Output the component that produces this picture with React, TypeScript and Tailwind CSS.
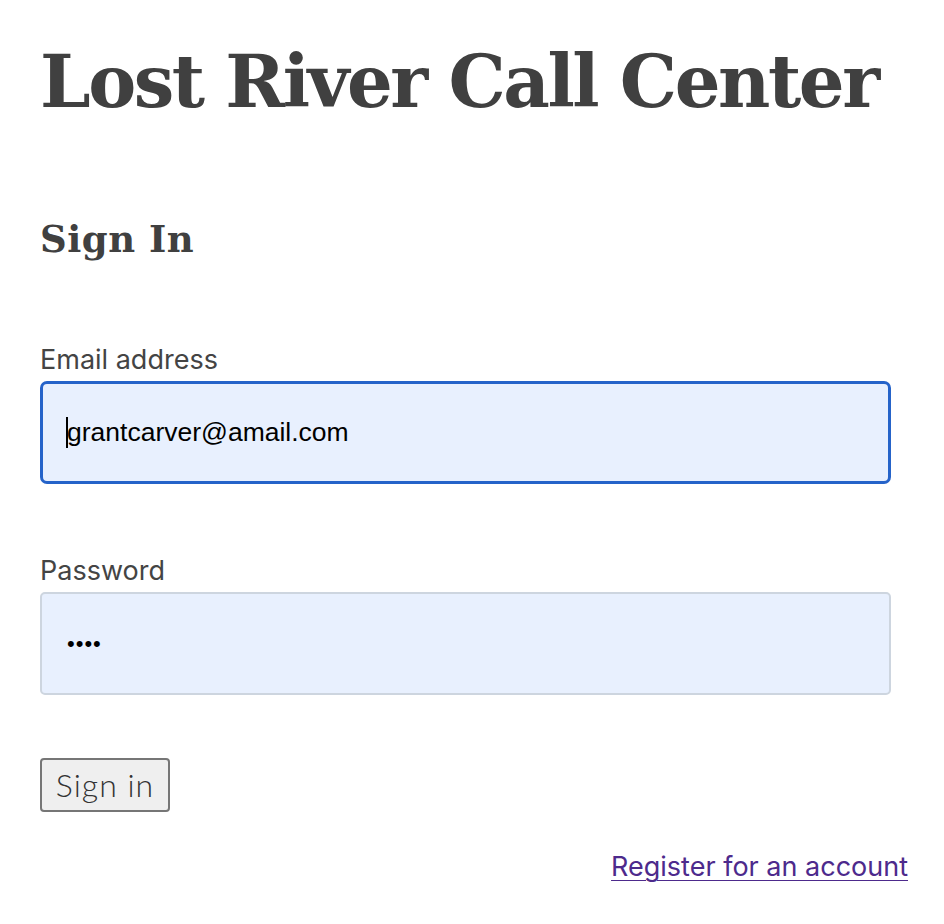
export default function App() {
  return (
    <div className="min-h-[924px] bg-white text-[#404040]">
      <div className="pl-10 pr-[53px] pt-[46px]">
        <h1 className="whitespace-nowrap font-['DejaVu_Serif',serif] text-[72px] font-bold leading-none tracking-[-2.45px] text-[#404040]">
          Lost River Call Center
        </h1>
        <h2 className="mt-[103px] font-['DejaVu_Serif',serif] text-[37px] font-bold leading-none tracking-[0.5px] text-[#404040]">
          Sign In
        </h2>
        <form className="mt-[88px] font-['Inter',sans-serif]">
          <label className="block text-[27px] leading-none text-[#444]">Email address</label>
          <div className="mt-[8px] flex h-[103px] items-center rounded-[7px] border-[3px] border-[#2563c9] bg-[#e8f0fe] pl-[23px] font-['Liberation_Sans',sans-serif] text-[26.5px] text-black">
            <span className="h-[31px] w-[2px] bg-black" />
            <span className="-ml-[1px]">grantcarver@amail.com</span>
          </div>
          <label className="mt-[73px] block text-[27px] leading-none text-[#444]">Password</label>
          <div className="mt-[8px] flex h-[103px] items-center rounded-[5px] border-2 border-[#cdd5df] bg-[#e8f0fe] pl-[25px] font-['Liberation_Sans',sans-serif] text-[22px] tracking-[1px] text-black">
            ••••
          </div>
          <button
            type="button"
            className="mt-[63px] h-[54px] w-[130px] rounded-[4px] border-2 border-[#767676] bg-[#efefef] font-['Lato',sans-serif] text-[32px] font-light leading-none tracking-[1px] text-[#333]"
          >
            Sign in
          </button>
        </form>
        <div className="mt-[35px] -mr-[17px] flex justify-end font-['Inter',sans-serif] text-[27px]">
          <a href="#" className="text-[#4d2a8c] underline decoration-1 underline-offset-4">
            Register for an account
          </a>
        </div>
      </div>
    </div>
  );
}
